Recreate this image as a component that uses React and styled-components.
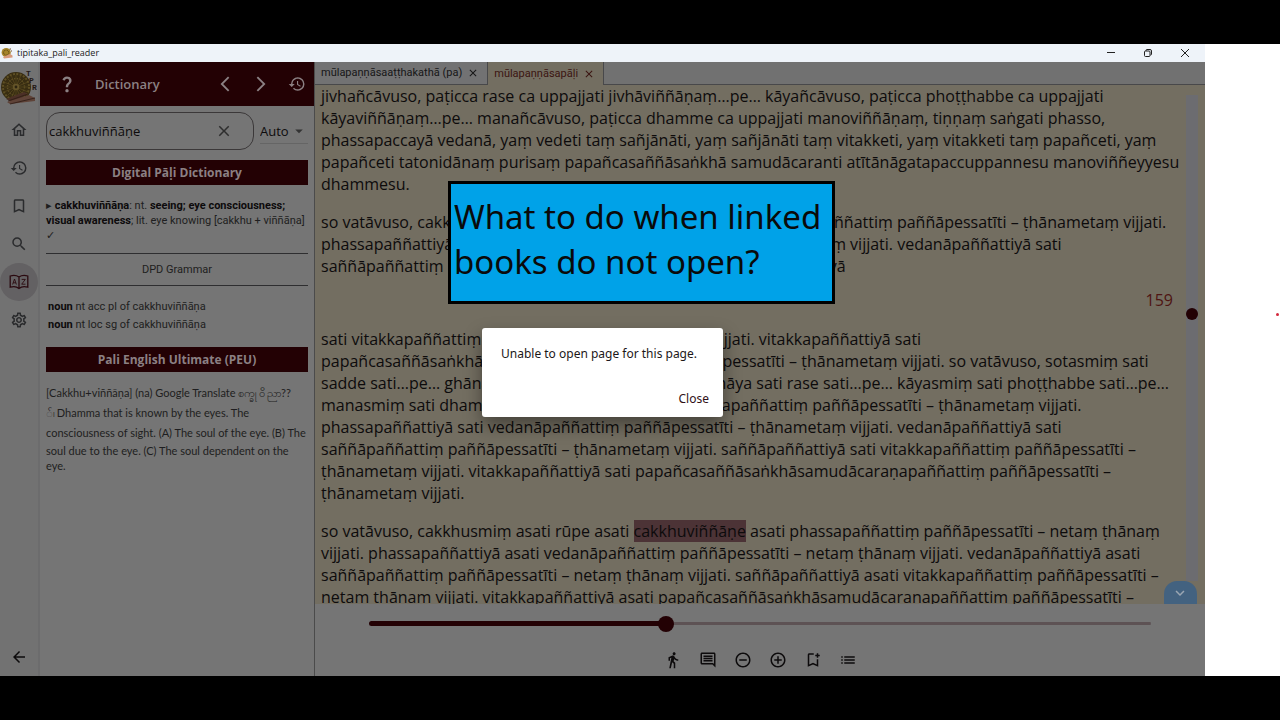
import React from 'react';
import styled, { createGlobalStyle } from 'styled-components';
import {
  MdOutlineHome, MdHistory, MdBookmarkBorder, MdSearch, MdOutlineSettings, MdArrowBack,
  MdArrowBackIosNew, MdArrowForwardIos, MdQuestionMark, MdClose, MdArrowDropDown,
  MdDirectionsWalk, MdOutlineComment, MdRemoveCircleOutline, MdAddCircleOutline,
  MdOutlineBookmarkAdd, MdList, MdKeyboardArrowDown,
} from 'react-icons/md';

const color = {
  surface: '#757575',
  rail: '#727272',
  paper: '#736e61',
  maroon: '#230104',
  onMaroon: '#8b8083',
  ink: '#0d0b0c',
  line: '#48484a',
};

const GlobalStyle = createGlobalStyle`
  * { box-sizing: border-box; }
  body { margin: 0; background: #000; font-family: "Open Sans", "Noto Sans", sans-serif; }
  button { font: inherit; color: inherit; background: none; border: 0; padding: 0; cursor: pointer; }
  svg { display: block; flex: none; }
  h1, h2, h3, p { margin: 0; font-weight: 400; }
`;

const Stage = styled.div`
  position: relative;
  min-height: 100vh;
  padding: 44px 0;
  display: flex;
  background: #000;
`;

const Desktop = styled.div`
  flex: 1;
  min-width: 0;
  display: flex;
  padding-right: 75px;
  background: #fff;
`;

const Window = styled.div`
  flex: 1;
  min-width: 0;
  display: flex;
  flex-direction: column;
`;

const TitleBar = styled.header`
  height: 18px;
  display: flex;
  align-items: center;
  gap: 4px;
  padding: 0 14px 0 1px;
  background: #eef3f9;
  color: #222;
  font-size: 9px;
  line-height: 18px;
`;

const WindowButtons = styled.div`
  margin-left: auto;
  display: flex;
  gap: 25px;
  button { width: 12px; height: 12px; display: grid; place-items: center; }
`;

const Body = styled.div`
  position: relative;
  flex: 1;
  display: flex;
  min-height: 0;
`;

const Rail = styled.nav`
  width: 40px;
  display: flex;
  flex-direction: column;
  align-items: center;
  padding: 8px 0 0;
  background: ${color.rail};
  border-right: 2px solid #6c6c6d;
`;

const RailButton = styled.button`
  width: 38px;
  height: 38px;
  border-radius: 50%;
  display: grid;
  place-items: center;
  color: ${(p) => (p.$active ? '#2b0a10' : '#2a2b2d')};
  background: ${(p) => (p.$active ? '#636163' : 'transparent')};
`;

const RailGroup = styled.div`
  display: flex;
  flex-direction: column;
  margin-top: 5px;
`;

const RailFoot = styled.div`
  margin-top: auto;
`;

const DictPanel = styled.aside`
  width: 274px;
  display: flex;
  flex-direction: column;
  background: ${color.surface};
`;

const DictHeader = styled.header`
  height: 44px;
  display: flex;
  align-items: center;
  gap: 18px;
  padding: 0 8px 0 17px;
  background: ${color.maroon};
  color: ${color.onMaroon};
  h1 { flex: 1; font-size: 13px; font-weight: 600; line-height: 20px; }
`;

const SearchRow = styled.div`
  display: flex;
  align-items: center;
  gap: 6px;
  padding: 6px 6px 10px;
`;

const SearchBox = styled.label`
  flex: 1;
  min-width: 0;
  height: 38px;
  display: flex;
  align-items: center;
  padding: 0 20px 0 2px;
  border: 1px solid #3b3839;
  border-radius: 14px;
  color: #2e2e2e;
  input {
    flex: 1;
    min-width: 0;
    padding: 0;
    border: 0;
    outline: 0;
    background: none;
    color: ${color.ink};
    font: 13px "Open Sans", "Noto Sans", sans-serif;
  }
`;

const ModeField = styled.label`
  width: 48px;
  display: flex;
  align-items: center;
  border-bottom: 1px solid #656565;
  color: #333;
  select {
    width: 30px;
    height: 24px;
    padding: 0;
    border: 0;
    outline: 0;
    appearance: none;
    background: none;
    color: ${color.ink};
    font: 13px "Open Sans", "Noto Sans", sans-serif;
  }
`;

const Entries = styled.div`
  padding: 0 6px;
  font-family: Roboto, "Noto Sans", sans-serif;
  font-size: 11px;
  line-height: 15px;
  color: #1e1e20;
  b { color: ${color.ink}; }
`;

const BookTitle = styled.h2`
  height: 25px;
  display: grid;
  place-items: center;
  background: ${color.maroon};
  color: ${color.onMaroon};
  font-family: "Open Sans", "Noto Sans", sans-serif;
  font-size: 12px;
  font-weight: 700;
`;

const Line = styled.span`
  display: block;
  white-space: nowrap;
`;

const Definition = styled.p`
  padding: 13px 0 10px;
`;

const GrammarTitle = styled.h3`
  height: 33px;
  display: grid;
  place-items: center;
  border: solid #2e2e30;
  border-width: 1px 0;
  font-size: 11px;
`;

const Grammar = styled.p`
  padding: 12px 2px 13px;
  line-height: 18px;
`;

const Translation = styled.p`
  padding: 11px 0;
  font-family: Lato, "Noto Sans", sans-serif;
`;

const TallLine = styled(Line)`
  line-height: 20px;
`;

const Reader = styled.main`
  flex: 1;
  min-width: 0;
  display: flex;
  flex-direction: column;
  background: ${color.surface};
  border-left: 1px solid #4b4b4b;
`;

const Tabs = styled.div`
  display: flex;
  height: 23px;
  background: #717171;
  border-bottom: 1px solid ${color.line};
`;

const Tab = styled.div`
  display: flex;
  align-items: center;
  gap: 5px;
  height: ${(p) => (p.$active ? 23 : 22)}px;
  padding: 0 8px 0 6px;
  border-right: 1px solid ${color.line};
  background: ${(p) => (p.$active ? color.paper : '#727273')};
  color: ${(p) => (p.$active ? '#3b1511' : '#161617')};
  font-family: Roboto, "Noto Sans", sans-serif;
  font-size: 11px;
  line-height: 22px;
`;

const Page = styled.div`
  flex: 1 1 0;
  min-height: 0;
  display: flex;
  overflow: hidden;
  background: ${color.paper};
`;

const PageText = styled.article`
  flex: 1;
  min-width: 0;
  padding: 0 0 0 6px;
  color: ${color.ink};
  font-family: "Open Sans", "Noto Sans", sans-serif;
  font-size: 16px;
  line-height: 22px;
  p { margin-bottom: 16px; }
  mark { background: #4c3336; color: inherit; }
`;

const PageNumber = styled.div`
  margin: -4px -10px 17px 0;
  text-align: right;
  color: #4e1412;
`;

const ScrollRail = styled.div`
  width: 34px;
  display: flex;
  flex-direction: column;
  align-items: center;
  padding-top: 10px;
  margin-right: 8px;
`;

const ScrollTrack = styled.div`
  flex: 1;
  width: 12px;
  margin-left: 24px;
  background: #6c6c70;
  padding-top: 213px;
`;

const ScrollKnob = styled.div`
  width: 12px;
  height: 12px;
  border-radius: 50%;
  background: ${color.maroon};
`;

const DownButton = styled.button`
  width: 33px;
  height: 23px;
  display: grid;
  place-items: center;
  border-radius: 13px 13px 0 0;
  background: #436280;
  color: #9aa6b2;
`;

const Controls = styled.footer`
  height: 72px;
  display: flex;
  flex-direction: column;
  align-items: center;
`;

const PageSlider = styled.input`
  align-self: stretch;
  height: 16px;
  margin: 11px 54px 0;
  appearance: none;
  background: none;
  &::-webkit-slider-runnable-track {
    height: 5px;
    border-radius: 3px;
    background:
      linear-gradient(${color.maroon}, ${color.maroon}) left center / 38% 5px no-repeat,
      linear-gradient(#5d5254, #5d5254) right center / 62% 3px no-repeat;
  }
  &::-webkit-slider-thumb {
    appearance: none;
    width: 16px;
    height: 16px;
    margin-top: -5px;
    border-radius: 50%;
    background: ${color.maroon};
  }
`;

const Tools = styled.div`
  display: flex;
  gap: 17px;
  margin-top: 20px;
  color: ${color.ink};
`;

const Barrier = styled.div`
  position: absolute;
  inset: 0;
  display: grid;
  place-items: center;
  padding-top: 7px;
`;

const Dialog = styled.div`
  width: 241px;
  height: 89px;
  display: flex;
  flex-direction: column;
  justify-content: space-between;
  padding: 16px 14px 8px 19px;
  border-radius: 3px;
  background: #fff;
  box-shadow: 0 8px 18px rgba(0, 0, 0, 0.4);
  color: #1c1718;
  font-family: "Noto Sans", sans-serif;
  font-size: 12px;
  line-height: 20px;
  white-space: nowrap;
  button { align-self: flex-end; color: #2f1016; }
`;

const Caption = styled.div`
  position: absolute;
  top: 181px;
  left: 35%;
  width: 387px;
  height: 123px;
  padding: 10px 3px;
  border: 3px solid #000;
  background: #00a2e8;
  color: #0a0a0a;
  font-family: "Noto Sans", sans-serif;
  font-size: 33px;
  line-height: 45px;
  white-space: nowrap;
`;

const Pointer = styled.div`
  position: absolute;
  top: 313px;
  right: 1px;
  width: 3px;
  height: 3px;
  border-radius: 50%;
  background: #d3283c;
`;

function Logo({ size }) {
  const spokes = Array.from({ length: 16 }, (_, i) => (i * 360) / 16);
  return (
    <svg width={size} height={size} viewBox="0 0 36 36" aria-hidden="true">
      <circle cx="15" cy="17" r="15" fill="#382d12" />
      <circle cx="15" cy="17" r="13" fill="none" stroke="#5f5024" strokeWidth="2" strokeDasharray="2 1.4" />
      <circle cx="15" cy="17" r="8.5" fill="none" stroke="#5f5024" strokeWidth="1.5" strokeDasharray="1.5 1.2" />
      {spokes.map((a) => (
        <path key={a} d="M15 14V5" stroke="#54451d" strokeWidth="0.8" transform={`rotate(${a} 15 17)`} />
      ))}
      <circle cx="15" cy="17" r="3.2" fill="#66562a" />
      <circle cx="15" cy="17" r="1.4" fill="#2d2410" />
      <path d="M5 29L23 22l4 2L12 32z" fill="#4b3026" />
      <path d="M6 32L28 25l6 3v3L9 34z" fill="#5f4338" />
      <path d="M7 31l20-7M9 34l25-6" stroke="#2d1a14" strokeWidth="0.8" />
      <g fill="#241a17" fontFamily="Liberation Mono, monospace" fontWeight="700" fontSize="8">
        <text x="25" y="6">T</text>
        <text x="28" y="13">P</text>
        <text x="31" y="20">R</text>
      </g>
    </svg>
  );
}

function AppIcon() {
  return (
    <svg width="12" height="12" viewBox="0 0 12 12" aria-hidden="true">
      <circle cx="5.2" cy="5.6" r="4.6" fill="#a5842b" />
      <circle cx="5.2" cy="5.6" r="2.6" fill="none" stroke="#5b4413" strokeWidth="1" strokeDasharray="1 .6" />
      <path d="M2 10l7-3 2.5 1.5v2L3 11.5z" fill="#d79a7c" />
      <path d="M8.6 2h1.4M10 4h1" stroke="#6b4a2b" />
    </svg>
  );
}

function DictionaryIcon() {
  return (
    <svg width="20" height="16" viewBox="0 0 20 16" fill="none" stroke="currentColor" strokeWidth="1.3" aria-hidden="true">
      <path d="M10 3C8 1.6 4 1.2 1.2 2v11.2C4 12.400 8 12.800 10 14.400 12 12.800 16 12.400 18.800 13.200V2C16 1.200 12 1.600 10 3zM10 3v11" />
      <path d="M3.600 10.500L5.500 5l1.900 5.500M4.200 8.800h2.600M12.700 5.400h3.600l-3.600 4.800h3.800" strokeWidth="0.9" />
    </svg>
  );
}

const railItems = [
  ['Home', <MdOutlineHome size={18} />],
  ['History', <MdHistory size={18} />],
  ['Bookmarks', <MdBookmarkBorder size={18} />],
  ['Search', <MdSearch size={18} />],
  ['Dictionary', <DictionaryIcon />],
  ['Settings', <MdOutlineSettings size={18} />],
];

const tools = [
  ['Go to', MdDirectionsWalk],
  ['Comment', MdOutlineComment],
  ['Smaller text', MdRemoveCircleOutline],
  ['Larger text', MdAddCircleOutline],
  ['Add bookmark', MdOutlineBookmarkAdd],
  ['Contents', MdList],
];

const before = [
  [
    'jivhañcāvuso, paṭicca rase ca uppajjati jivhāviññāṇaṃ…pe… kāyañcāvuso, paṭicca phoṭṭhabbe ca uppajjati',
    'kāyaviññāṇaṃ…pe… manañcāvuso, paṭicca dhamme ca uppajjati manoviññāṇaṃ, tiṇṇaṃ saṅgati phasso,',
    'phassapaccayā vedanā, yaṃ vedeti taṃ sañjānāti, yaṃ sañjānāti taṃ vitakketi, yaṃ vitakketi taṃ papañceti, yaṃ',
    'papañceti tatonidānaṃ purisaṃ papañcasaññāsaṅkhā samudācaranti atītānāgatapaccuppannesu manoviññeyyesu',
    'dhammesu.',
  ],
  [
    'so vatāvuso, cakkhusmiṃ sati rūpe sati cakkhuviññāṇe sati phassapaññattiṃ paññāpessatīti – ṭhānametaṃ vijjati.',
    'phassapaññattiyā sati vedanāpaññattiṃ paññāpessatīti – ṭhānametaṃ vijjati. vedanāpaññattiyā sati',
    'saññāpaññattiṃ paññāpessatīti – ṭhānametaṃ vijjati. saññāpaññattiyā',
  ],
];

const after = [
  [
    'sati vitakkapaññattiṃ paññāpessatīti – ṭhānametaṃ vijjati. vitakkapaññattiyā sati',
    'papañcasaññāsaṅkhāsamudācaraṇapaññattiṃ paññāpessatīti – ṭhānametaṃ vijjati. so vatāvuso, sotasmiṃ sati',
    'sadde sati…pe… ghānasmiṃ sati gandhe sati…pe… jivhāya sati rase sati…pe… kāyasmiṃ sati phoṭṭhabbe sati…pe…',
    'manasmiṃ sati dhamme sati manoviññāṇe sati phassapaññattiṃ paññāpessatīti – ṭhānametaṃ vijjati.',
    'phassapaññattiyā sati vedanāpaññattiṃ paññāpessatīti – ṭhānametaṃ vijjati. vedanāpaññattiyā sati',
    'saññāpaññattiṃ paññāpessatīti – ṭhānametaṃ vijjati. saññāpaññattiyā sati vitakkapaññattiṃ paññāpessatīti –',
    'ṭhānametaṃ vijjati. vitakkapaññattiyā sati papañcasaññāsaṅkhāsamudācaraṇapaññattiṃ paññāpessatīti –',
    'ṭhānametaṃ vijjati.',
  ],
  [
    <>so vatāvuso, cakkhusmiṃ asati rūpe asati <mark>cakkhuviññāṇe</mark> asati phassapaññattiṃ paññāpessatīti – netaṃ ṭhānaṃ</>,
    'vijjati. phassapaññattiyā asati vedanāpaññattiṃ paññāpessatīti – netaṃ ṭhānaṃ vijjati. vedanāpaññattiyā asati',
    'saññāpaññattiṃ paññāpessatīti – netaṃ ṭhānaṃ vijjati. saññāpaññattiyā asati vitakkapaññattiṃ paññāpessatīti –',
    'netaṃ ṭhānaṃ vijjati. vitakkapaññattiyā asati papañcasaññāsaṅkhāsamudācaraṇapaññattiṃ paññāpessatīti –',
  ],
];

function Paragraphs({ items }) {
  return items.map((lines, i) => (
    <p key={i}>{lines.map((line, j) => <Line key={j}>{line}</Line>)}</p>
  ));
}

export default function App() {
  return (
    <Stage>
      <GlobalStyle />
      <Desktop>
        <Window>
          <TitleBar>
            <AppIcon />
            <span>tipitaka_pali_reader</span>
            <WindowButtons>
              <button aria-label="Minimize">
                <svg width="10" height="10" viewBox="0 0 10 10" stroke="#222" fill="none"><path d="M1 4.500h8" /></svg>
              </button>
              <button aria-label="Restore">
                <svg width="10" height="10" viewBox="0 0 10 10" stroke="#222" fill="none">
                  <rect x="1.500" y="3" width="5.500" height="5.500" rx="1" />
                  <path d="M3 3V2.500Q3 1.500 4 1.500h3Q8.500 1.500 8.500 3v3Q8.500 7 7.500 7" />
                </svg>
              </button>
              <button aria-label="Close window">
                <svg width="10" height="10" viewBox="0 0 10 10" stroke="#222" fill="none"><path d="M1 1l8 8M9 1l-8 8" /></svg>
              </button>
            </WindowButtons>
          </TitleBar>
          <Body>
            <Rail>
              <Logo size={36} />
              <RailGroup>
                {railItems.map(([name, icon]) => (
                  <RailButton key={name} aria-label={name} $active={name === 'Dictionary'}>{icon}</RailButton>
                ))}
              </RailGroup>
              <RailFoot>
                <RailButton aria-label="Back"><MdArrowBack size={18} color={color.ink} /></RailButton>
              </RailFoot>
            </Rail>
            <DictPanel>
              <DictHeader>
                <button aria-label="Help"><MdQuestionMark size={20} /></button>
                <h1>Dictionary</h1>
                <button aria-label="Previous"><MdArrowBackIosNew size={18} /></button>
                <button aria-label="Next"><MdArrowForwardIos size={18} /></button>
                <button aria-label="Recent words"><MdHistory size={18} /></button>
              </DictHeader>
              <SearchRow>
                <SearchBox>
                  <input aria-label="Word" defaultValue="cakkhuviññāṇe" />
                  <button aria-label="Clear"><MdClose size={18} /></button>
                </SearchBox>
                <ModeField>
                  <select aria-label="Match mode"><option>Auto</option></select>
                  <MdArrowDropDown size={18} />
                </ModeField>
              </SearchRow>
              <Entries>
                <BookTitle>Digital Pāḷi Dictionary</BookTitle>
                <Definition>
                  <Line>▸ <b>cakkhuviññāṇa</b>: nt. <b>seeing; eye consciousness;</b></Line>
                  <Line><b>visual awareness</b>; lit. eye knowing [cakkhu + viññāṇa]</Line>
                  <Line>✓</Line>
                </Definition>
                <GrammarTitle>DPD Grammar</GrammarTitle>
                <Grammar>
                  <Line><b>noun</b> nt acc pl of cakkhuviññāṇa</Line>
                  <Line><b>noun</b> nt loc sg of cakkhuviññāṇa</Line>
                </Grammar>
                <BookTitle>Pali English Ultimate (PEU)</BookTitle>
                <Translation>
                  <TallLine>[Cakkhu+viññāṇa] (na) Google Translate စက္ခု ဝိ ညာ??</TallLine>
                  <TallLine>်၊ Dhamma that is known by the eyes. The</TallLine>
                  <TallLine>consciousness of sight. (A) The soul of the eye. (B) The</TallLine>
                  <Line>soul due to the eye. (C) The soul dependent on the</Line>
                  <Line>eye.</Line>
                </Translation>
              </Entries>
            </DictPanel>
            <Reader>
              <Tabs>
                <Tab>mūlapaṇṇāsaaṭṭhakathā (pa)<button aria-label="Close tab"><MdClose size={12} /></button></Tab>
                <Tab $active>mūlapaṇṇāsapāḷi<button aria-label="Close tab"><MdClose size={12} /></button></Tab>
              </Tabs>
              <Page>
                <PageText>
                  <Paragraphs items={before} />
                  <PageNumber>159</PageNumber>
                  <Paragraphs items={after} />
                </PageText>
                <ScrollRail>
                  <ScrollTrack><ScrollKnob /></ScrollTrack>
                  <DownButton aria-label="Scroll down"><MdKeyboardArrowDown size={18} /></DownButton>
                </ScrollRail>
              </Page>
              <Controls>
                <PageSlider type="range" aria-label="Page" min="0" max="1000" defaultValue="377" />
                <Tools>
                  {tools.map(([name, Icon]) => (
                    <button key={name} aria-label={name}><Icon size={18} /></button>
                  ))}
                </Tools>
              </Controls>
            </Reader>
            <Barrier>
              <Dialog role="dialog" aria-label="Notice">
                <p>Unable to open page for this page.</p>
                <button>Close</button>
              </Dialog>
            </Barrier>
          </Body>
        </Window>
      </Desktop>
      <Caption>What to do when linked<br />books do not open?</Caption>
      <Pointer />
    </Stage>
  );
}
